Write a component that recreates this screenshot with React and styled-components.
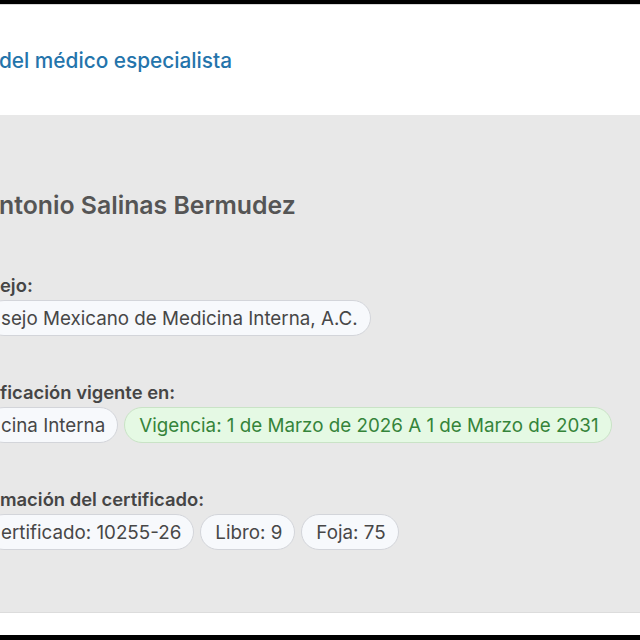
import React from 'react'
import styled, { createGlobalStyle } from 'styled-components'

const GlobalStyle = createGlobalStyle`
  * { box-sizing: border-box; }
  html, body { margin: 0; padding: 0; background: #000; }
  body { font-family: Inter, "Noto Sans", sans-serif; overflow: hidden; }
`

const Screen = styled.div`
  width: 640px;
  height: 640px;
  display: flex;
  flex-direction: column;
  background: #000;
  padding: 4px 0 5px;
  overflow: hidden;
`

const Header = styled.header`
  height: 111px;
  flex-shrink: 0;
  background: #fff;
  display: flex;
  align-items: center;
  border-top: 1px solid #d8d8d8;
`

const HeaderTitle = styled.h1`
  margin: 0 0 0 -1px;
  font-size: 20.8px;
  font-weight: 500;
  color: #2474ab;
  white-space: nowrap;
`

const Card = styled.section`
  background: #e8e8e8;
  padding: 74px 0 62px;
  display: flex;
  flex-direction: column;
  gap: 52px;
`

const Name = styled.h2`
  margin: 0 0 0 -1px;
  font-size: 24.8px;
  line-height: 32px;
  font-weight: 600;
  color: #555;
  white-space: nowrap;
`

const Fields = styled.div`
  display: flex;
  flex-direction: column;
  gap: 44px;
`

const Field = styled.div`
  display: flex;
  flex-direction: column;
  gap: 3px;
`

const Label = styled.div`
  font-size: 18.4px;
  line-height: 24px;
  font-weight: 600;
  color: #454545;
  white-space: nowrap;
`

const Pills = styled.div`
  display: flex;
  gap: 6px;
  margin-left: -14px;
`

const Pill = styled.span`
  height: 36px;
  display: inline-flex;
  align-items: center;
  padding: 0 12px 0 14px;
  border-radius: 18px;
  font-size: 18.8px;
  white-space: nowrap;
  background: ${p => p.green ? '#e5f9e4' : '#f7f9fc'};
  border: 1px solid ${p => p.green ? '#c9e3c6' : '#d3d5da'};
  color: ${p => p.green ? '#35843a' : '#474747'};
`

const Footer = styled.div`
  flex: 1;
  background: #fff;
  border-top: 1px solid #dcdcdc;
`

export default function App() {
  return (
    <>
      <GlobalStyle />
      <Screen>
        <Header>
          <HeaderTitle>del médico especialista</HeaderTitle>
        </Header>
        <Card>
          <Name>ntonio Salinas Bermudez</Name>
          <Fields>
            <Field>
              <Label>ejo:</Label>
              <Pills>
                <Pill>sejo Mexicano de Medicina Interna, A.C.</Pill>
              </Pills>
            </Field>
            <Field>
              <Label>ficación vigente en:</Label>
              <Pills>
                <Pill>cina Interna</Pill>
                <Pill green>Vigencia: 1 de Marzo de 2026 A 1 de Marzo de 2031</Pill>
              </Pills>
            </Field>
            <Field>
              <Label>mación del certificado:</Label>
              <Pills>
                <Pill>ertificado: 10255-26</Pill>
                <Pill>Libro: 9</Pill>
                <Pill>Foja: 75</Pill>
              </Pills>
            </Field>
          </Fields>
        </Card>
        <Footer />
      </Screen>
    </>
  )
}
